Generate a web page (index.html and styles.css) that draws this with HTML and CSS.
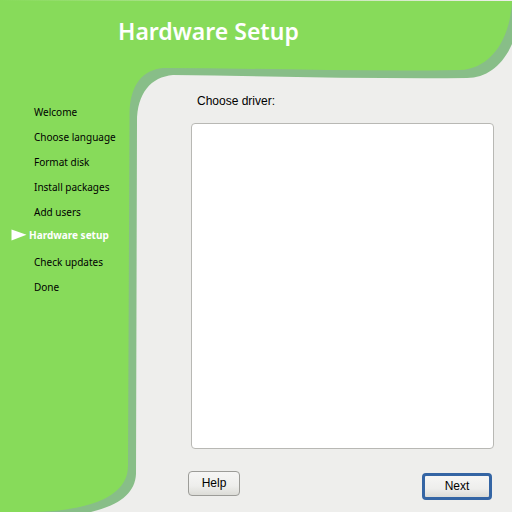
FILE: index.html
```
<!DOCTYPE html>
<html lang="en">
<head>
<meta charset="utf-8">
<title>Hardware Setup</title>
<link rel="stylesheet" href="styles.css">
</head>
<body>
<div class="installer">
  <svg class="backdrop" viewBox="0 0 512 512" preserveAspectRatio="none" aria-hidden="true">
    <defs>
      <linearGradient id="edge" x1="0" x2="1" y1="0" y2="0">
        <stop offset="0" stop-color="#87db5a"/>
        <stop offset="1" stop-color="#eeeeec"/>
      </linearGradient>
    </defs>
    <path fill="#88be88" d="M0 1H512V44C503 65 487 78 467 78C370 79 270 76 173 75C151 77 137 93 137 122L136 474C135 493 120 505 91 512H0Z"/>
    <path fill="#87db5a" d="M0 1H512C510 42 489 69 460 70C360 72 260 68 163 68C143 70 130 84 129.500 114L128 466C128 493 98 510 35 512H0Z"/>
    <rect width="512" height="1" fill="url(#edge)"/>
  </svg>
  <header class="header"><h1 class="title">Hardware Setup</h1></header>
  <nav class="sidebar" aria-label="Installation steps">
    <ol class="steps">
      <li class="step">Welcome</li>
      <li class="step">Choose language</li>
      <li class="step">Format disk</li>
      <li class="step">Install packages</li>
      <li class="step">Add users</li>
      <li class="step current" aria-current="step"><svg class="arrow" viewBox="0 0 16 12" aria-hidden="true"><path fill="#fff" d="M0.500 0.500L15.500 5.700L0.500 11.500Z"/></svg>Hardware setup</li>
      <li class="step">Check updates</li>
      <li class="step">Done</li>
    </ol>
  </nav>
  <main class="content">
    <label class="label" for="driver">Choose driver:</label>
    <select class="drivers" id="driver" size="12"></select>
    <div class="actions">
      <button class="button help" type="button">Help</button>
      <button class="button next" type="button">Next</button>
    </div>
  </main>
</div>
</body>
</html>
```
FILE: styles.css
```
* {
  box-sizing: border-box;
}

body {
  margin: 0;
  background: #eeeeec;
  color: #000;
  font-family: "Liberation Sans", sans-serif;
}

.installer {
  position: relative;
  display: grid;
  grid-template-columns: 136px 1fr;
  grid-template-rows: auto 1fr;
  min-height: 100vh;
}

.backdrop {
  position: absolute;
  inset: 0;
  z-index: -1;
  width: 100%;
  height: 100%;
}

.header {
  grid-column: 1 / -1;
  height: 80px;
  padding: 15px 16px 0 118px;
}

.title {
  margin: 0;
  color: #fff;
  font: 600 23px/32px "Noto Sans", sans-serif;
}

.sidebar {
  padding-top: 20px;
}

.steps {
  margin: 0;
  padding: 0;
  list-style: none;
}

.step {
  height: 25px;
  padding-left: 34px;
  font: 10px/25px "Noto Sans", sans-serif;
  white-space: nowrap;
}

.current {
  display: flex;
  align-items: center;
  gap: 2px;
  padding: 0 0 5px 11px;
  color: #fff;
  font-weight: bold;
}

.arrow {
  width: 16px;
  height: 12px;
}

.content {
  display: flex;
  flex-direction: column;
  padding: 11px 18px 12px 52px;
}

.label {
  padding-left: 9px;
  font-size: 12px;
  line-height: 20px;
}

.drivers {
  flex: 1;
  align-self: stretch;
  margin: 12px 0 0 3px;
  border: 1px solid #b8b8b4;
  border-radius: 4px;
  background: #fff;
  outline: none;
}

.actions {
  display: flex;
  justify-content: space-between;
  align-items: flex-start;
  padding: 22px 2px 0 0;
}

.button {
  padding: 0;
  border: 1px solid #9c9c98;
  border-radius: 4px;
  background: linear-gradient(#f6f6f5, #eeeeec 60%, #dcdcd7);
  color: #000;
  font: 12px/20px "Liberation Sans", sans-serif;
}

.help {
  width: 52px;
  height: 25px;
  padding-bottom: 2px;
}

.next {
  width: 70px;
  height: 27px;
  margin-top: 2px;
  padding-bottom: 1px;
  border: 3px solid #3465a4;
}
```
